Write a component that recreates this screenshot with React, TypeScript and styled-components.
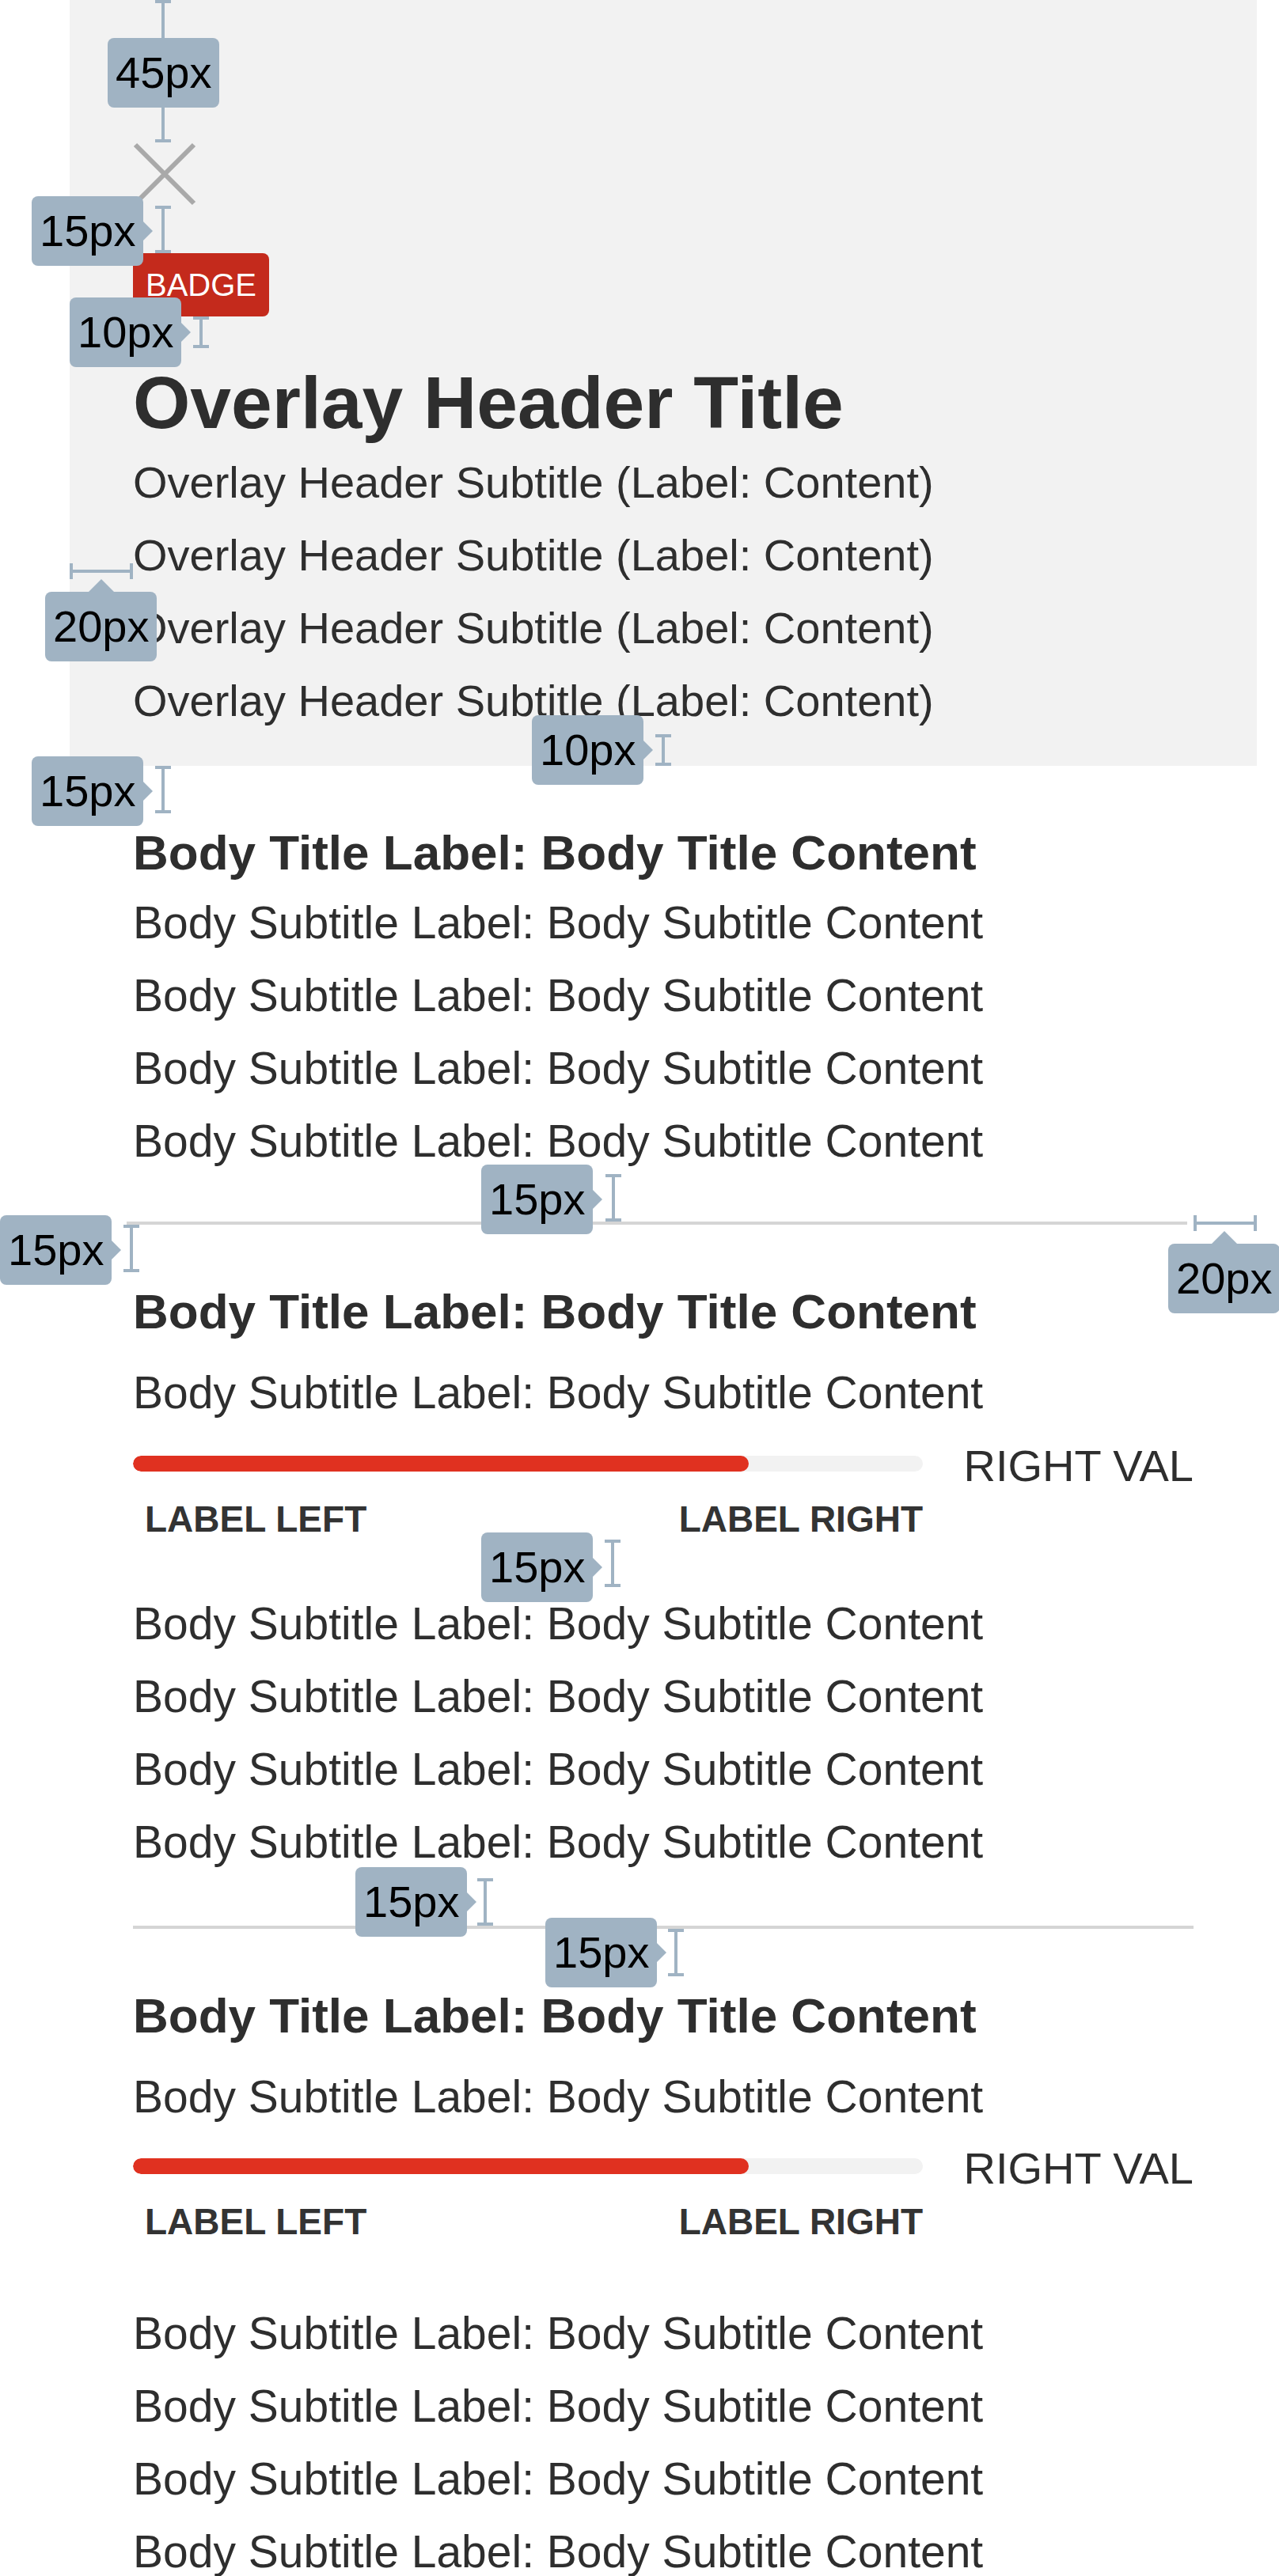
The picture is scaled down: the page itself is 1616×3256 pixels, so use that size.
import React from "react";
import styled, { createGlobalStyle, css } from "styled-components";

const GlobalStyle = createGlobalStyle`
  html, body {
    margin: 0;
    padding: 0;
    background: #ffffff;
  }
  body {
    font-family: "Liberation Sans", Arial, sans-serif;
    color: #2e2e2e;
  }
`;

const Page = styled.div`
  position: relative;
  width: 1616px;
  height: 3256px;
  overflow: hidden;
`;

const Sheet = styled.main`
  margin-left: 88px;
  width: 1500px;
`;

const Overlay = styled.header`
  background: #f2f2f2;
  padding: 180px 80px 36px;
  display: flex;
  flex-direction: column;
  align-items: flex-start;
`;

const Close = styled.svg`
  display: block;
  width: 80px;
  height: 80px;
`;

const Badge = styled.span`
  margin-top: 60px;
  height: 80px;
  padding: 0 16px;
  border-radius: 8px;
  background: #c42a1c;
  color: #ffffff;
  font-size: 40px;
  line-height: 80px;
`;

const OverlayTitle = styled.h1`
  margin: 40px 0 0;
  padding-top: 14px;
  font-size: 93px;
  line-height: 110px;
  font-weight: 700;
`;

const Line = styled.p<{ $size?: number }>`
  margin: 0;
  font-size: ${(p) => p.$size ?? 56}px;
  line-height: 92px;
  white-space: nowrap;
`;

const Section = styled.section<{ $top: number }>`
  padding: ${(p) => p.$top}px 80px 0;
`;

const BodyTitle = styled.h2`
  margin: 0;
  padding-top: 8px;
  font-size: 62px;
  line-height: 84px;
  font-weight: 700;
  white-space: nowrap;
`;

const Lines = styled.div<{ $gap?: number }>`
  margin-top: ${(p) => p.$gap ?? 0}px;
`;

const Divider = styled.hr<{ $gap: number; $shift?: number }>`
  border: 0;
  height: 4px;
  background: #d5d5d5;
  margin: ${(p) => p.$gap}px ${(p) => p.$shift ?? 0}px 0
    ${(p) => -(p.$shift ?? 0)}px;
`;

const ProgressRow = styled.div<{ $gap: number }>`
  margin-top: ${(p) => p.$gap}px;
  display: flex;
  align-items: flex-start;
`;

const Track = styled.div`
  flex: none;
  width: 998px;
  height: 20px;
  margin-top: 19px;
  border-radius: 10px;
  background: #f2f2f2;
  overflow: hidden;
`;

const Fill = styled.div`
  height: 100%;
  border-radius: 10px;
  background: #e03120;
`;

const Value = styled.span`
  margin-left: auto;
  font-size: 56px;
  line-height: 64px;
  white-space: nowrap;
`;

const Labels = styled.div`
  width: 998px;
  margin-top: 9px;
  display: flex;
  justify-content: space-between;
  font-size: 46px;
  line-height: 52px;
  font-weight: 700;
  color: #333333;
  span:first-child {
    padding-left: 15px;
  }
`;

/* measurement annotations drawn over the spec */
const ink = "#a0b3c3";

const Bracket = styled.div<{ $v: boolean; $x: number; $y: number; $len: number }>`
  position: absolute;
  box-sizing: border-box;
  ${(p) =>
    p.$v
      ? css`
          left: ${p.$x - 10}px;
          top: ${p.$y}px;
          width: 20px;
          height: ${p.$len}px;
          border-top: 4px solid ${ink};
          border-bottom: 4px solid ${ink};
          &::before {
            left: 8px;
            top: 0;
            bottom: 0;
            width: 4px;
          }
        `
      : css`
          left: ${p.$x}px;
          top: ${p.$y - 10}px;
          width: ${p.$len}px;
          height: 20px;
          border-left: 4px solid ${ink};
          border-right: 4px solid ${ink};
          &::before {
            top: 8px;
            left: 0;
            right: 0;
            height: 4px;
          }
        `}
  &::before {
    content: "";
    position: absolute;
    background: ${ink};
  }
`;

const Tag = styled.div<{ $x: number; $y: number; $arrow?: "right" | "up" }>`
  position: absolute;
  left: ${(p) => p.$x}px;
  top: ${(p) => p.$y}px;
  height: 88px;
  padding: 0 10px;
  border-radius: 8px;
  background: ${ink};
  color: #000000;
  font-size: 56px;
  line-height: 88px;
  white-space: nowrap;
  &::after {
    content: "";
    position: absolute;
    width: 0;
    height: 0;
    ${(p) =>
      p.$arrow === "right"
        ? css`
            left: 100%;
            top: 50%;
            margin-top: -12px;
            border-top: 12px solid transparent;
            border-bottom: 12px solid transparent;
            border-left: 12px solid ${ink};
          `
        : p.$arrow === "up"
        ? css`
            bottom: 100%;
            left: 50%;
            margin-left: -16px;
            border-left: 16px solid transparent;
            border-right: 16px solid transparent;
            border-bottom: 16px solid ${ink};
          `
        : css`
            display: none;
          `}
  }
`;

type Mark = {
  text: string;
  v: boolean;
  x: number;
  y: number;
  len: number;
  tx: number;
  ty: number;
  arrow?: "right" | "up";
};

const marks: Mark[] = [
  { text: "45px", v: true, x: 206, y: 0, len: 180, tx: 136, ty: 48 },
  { text: "15px", v: true, x: 206, y: 260, len: 60, tx: 40, ty: 248, arrow: "right" },
  { text: "10px", v: true, x: 254, y: 400, len: 40, tx: 88, ty: 376, arrow: "right" },
  { text: "20px", v: false, x: 88, y: 722, len: 80, tx: 57, ty: 748, arrow: "up" },
  { text: "10px", v: true, x: 838, y: 928, len: 40, tx: 672, ty: 904, arrow: "right" },
  { text: "15px", v: true, x: 206, y: 968, len: 60, tx: 40, ty: 956, arrow: "right" },
  { text: "15px", v: true, x: 775, y: 1484, len: 60, tx: 608, ty: 1472, arrow: "right" },
  { text: "15px", v: true, x: 166, y: 1548, len: 60, tx: 0, ty: 1536, arrow: "right" },
  { text: "20px", v: false, x: 1508, y: 1546, len: 80, tx: 1476, ty: 1572, arrow: "up" },
  { text: "15px", v: true, x: 774, y: 1946, len: 60, tx: 608, ty: 1937, arrow: "right" },
  { text: "15px", v: true, x: 613, y: 2374, len: 60, tx: 449, ty: 2360, arrow: "right" },
  { text: "15px", v: true, x: 854, y: 2438, len: 60, tx: 689, ty: 2424, arrow: "right" },
];

const overlaySub = "Overlay Header Subtitle (Label: Content)";
const bodyTitle = "Body Title Label: Body Title Content";
const bodySub = "Body Subtitle Label: Body Subtitle Content";

const SubLines = ({ text, gap }: { text: string; gap?: number }) => (
  <Lines $gap={gap}>
    {[0, 1, 2, 3].map((i) => (
      <Line key={i} $size={57}>
        {text}
      </Line>
    ))}
  </Lines>
);

const Progress = ({ gap, percent }: { gap: number; percent: number }) => (
  <>
    <ProgressRow $gap={gap}>
      <Track>
        <Fill style={{ width: `${percent}%` }} />
      </Track>
      <Value>RIGHT VAL</Value>
    </ProgressRow>
    <Labels>
      <span>LABEL LEFT</span>
      <span>LABEL RIGHT</span>
    </Labels>
  </>
);

const App = () => {
  return (
    <Page>
      <GlobalStyle />
      <Sheet>
        <Overlay>
          <Close viewBox="0 0 80 80">
            <path
              d="M3 3 L77 77 M77 3 L3 77"
              stroke="#a9a9a9"
              strokeWidth="6"
              fill="none"
            />
          </Close>
          <Badge>BADGE</Badge>
          <OverlayTitle>Overlay Header Title</OverlayTitle>
          {[0, 1, 2, 3].map((i) => (
            <Line key={i}>{overlaySub}</Line>
          ))}
        </Overlay>

        <Section $top={60}>
          <BodyTitle>{bodyTitle}</BodyTitle>
          <SubLines text={bodySub} />
          <Divider $gap={56} $shift={8} />
        </Section>

        <Section $top={60}>
          <BodyTitle>{bodyTitle}</BodyTitle>
          <Lines $gap={14}>
            <Line $size={57}>{bodySub}</Line>
          </Lines>
          <Progress gap={15} percent={78} />
          <SubLines text={bodySub} gap={60} />
          <Divider $gap={60} />
        </Section>

        <Section $top={60}>
          <BodyTitle>{bodyTitle}</BodyTitle>
          <Lines $gap={14}>
            <Line $size={57}>{bodySub}</Line>
          </Lines>
          <Progress gap={13} percent={78} />
          <SubLines text={bodySub} gap={69} />
        </Section>
      </Sheet>

      {marks.map((m, i) => (
        <React.Fragment key={i}>
          <Bracket $v={m.v} $x={m.x} $y={m.y} $len={m.len} />
          <Tag $x={m.tx} $y={m.ty} $arrow={m.arrow}>
            {m.text}
          </Tag>
        </React.Fragment>
      ))}
    </Page>
  );
};

export default App;
